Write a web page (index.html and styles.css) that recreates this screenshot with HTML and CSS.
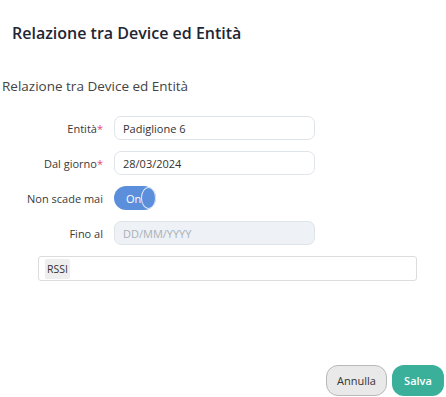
FILE: index.html
```html
<!DOCTYPE html>
<html>
<head>
    <title>Relazione tra Device ed Entità</title>
    <link rel="stylesheet" href="styles.css">
</head>
<body>

<div class="modal">
    <div class="modal-header">
        <h2>Relazione tra Device ed Entità</h2>
    </div>

    <div class="modal-body">
        <h3 class="section-title">Relazione tra Device ed Entità</h3>

        <form class="form-grid">
            <label class="form-label">Entità<span class="required">*</span></label>
            <input class="form-input" type="text" value="Padiglione 6">

            <label class="form-label">Dal giorno<span class="required">*</span></label>
            <input class="form-input" type="text" value="28/03/2024">

            <label class="form-label">Non scade mai</label>
            <div class="toggle">
                <span class="toggle-text">On</span>
                <span class="toggle-knob"></span>
            </div>

            <label class="form-label">Fino al</label>
            <input class="form-input" type="text" placeholder="DD/MM/YYYY" disabled>
        </form>

        <div class="tag-box">
            <span class="tag">RSSI</span>
        </div>
    </div>

    <div class="modal-footer">
        <button class="cancel-button" type="button">Annulla</button>
        <button class="save-button" type="button">Salva</button>
    </div>
</div>

</body>
</html>
```

FILE: styles.css
```css
body {
    font-family: "Open Sans", "Liberation Sans", sans-serif;
    margin: 0;
    background-color: #fff;
    color: #333;
}

.modal {
    width: 446px;
    height: 397px;
    display: flex;
    flex-direction: column;
}

.modal-header {
    padding: 22px 12px 0 12px;
}

.modal-header h2 {
    margin: 0;
    font-size: 16px;
    font-weight: 600;
    color: #1f2633;
    line-height: 22px;
}

.modal-body {
    flex: 1;
}

.section-title {
    margin: 32px 0 0 2px;
    font-size: 13.5px;
    font-weight: 400;
    color: #444;
    line-height: 20px;
}

.form-grid {
    display: grid;
    grid-template-columns: 103px 201px;
    column-gap: 11px;
    row-gap: 11px;
    align-items: center;
    margin-top: 20px;
}

.form-label {
    text-align: right;
    font-size: 11px;
    color: #3a3a3a;
}

.required {
    color: #e8457c;
}

.form-input {
    box-sizing: border-box;
    height: 24px;
    width: 201px;
    border: 1px solid #dfe4ea;
    border-radius: 7px;
    padding: 0 8px;
    font-family: inherit;
    font-size: 11px;
    color: #333;
    background-color: #fff;
    outline: none;
}

.form-input:disabled {
    background-color: #eef1f5;
}

.form-input::placeholder {
    color: #aab0b8;
}

.toggle {
    width: 42px;
    height: 24px;
    border-radius: 12px;
    background-color: #5b8fdc;
    display: flex;
    align-items: center;
    justify-content: space-between;
    box-sizing: border-box;
    padding-left: 12px;
}

.toggle-text {
    color: #fff;
    font-size: 11px;
}

.toggle-knob {
    box-sizing: border-box;
    width: 22px;
    height: 22px;
    border-radius: 50%;
    border: 1px solid #e3ebf8;
    background-color: #5b8fdc;
}

.tag-box {
    box-sizing: border-box;
    margin: 11px 0 0 38px;
    width: 379px;
    height: 25px;
    border: 1px solid #dcdcdc;
    border-radius: 3px;
    display: flex;
    align-items: center;
    padding-left: 6px;
}

.tag {
    background-color: #eeeeee;
    font-size: 10.5px;
    color: #333;
    padding: 3px 2px;
    border-radius: 2px;
}

.modal-footer {
    display: flex;
    justify-content: flex-end;
    gap: 5px;
    padding: 0 2px 1px 0;
}

.cancel-button,
.save-button {
    height: 31px;
    border-radius: 12px;
    font-family: inherit;
    font-size: 11px;
    font-weight: 500;
    cursor: pointer;
}

.cancel-button {
    width: 61px;
    background-color: #e9e9e9;
    border: 1px solid #b9b9b9;
    color: #333;
}

.save-button {
    width: 52px;
    background-color: #3aaf9a;
    border: none;
    color: #fff;
    font-weight: 600;
}
```
